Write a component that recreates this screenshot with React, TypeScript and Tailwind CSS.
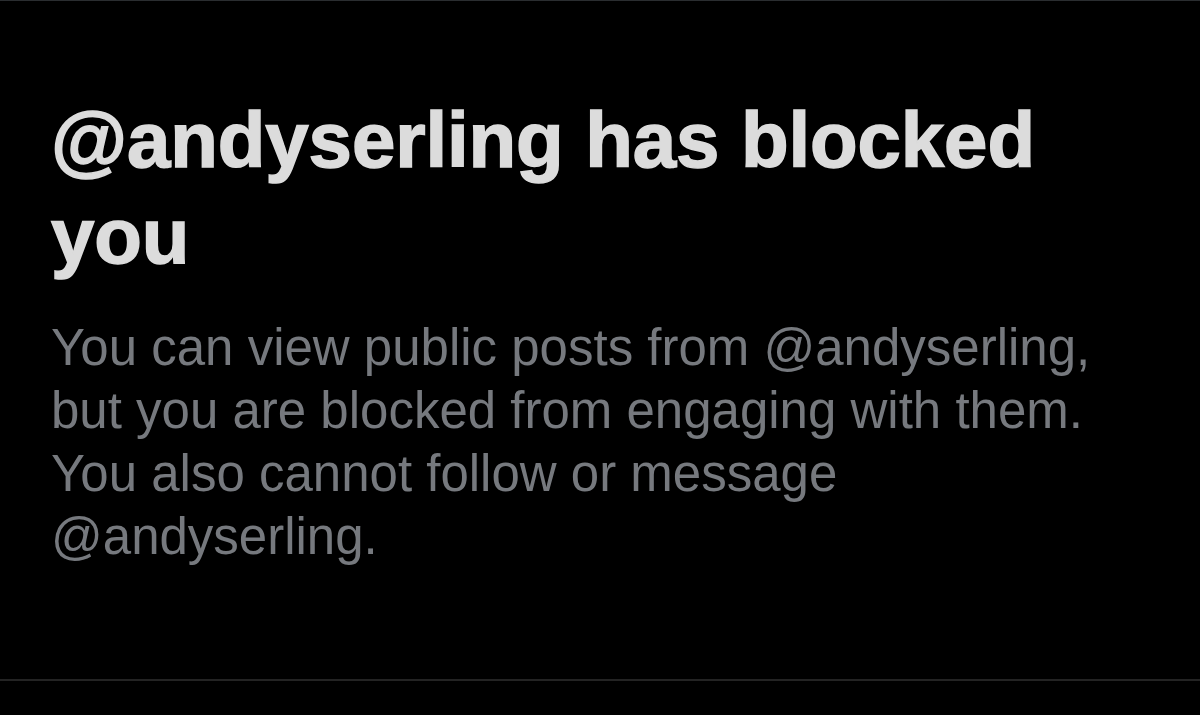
export default function App() {
  return (
    <div className="w-[1200px] h-[715px] bg-black flex flex-col overflow-hidden" style={{ fontFamily: '"Liberation Sans", Arial, sans-serif' }}>
      <div className="h-px bg-[#2a2d30]" />
      <div className="flex-1 pl-[51px] pr-[40px] pt-[91px]">
        <h1 className="w-[1100px] text-[78px] leading-[96px] font-bold text-[#dcdcdc] tracking-[-0.1px] [-webkit-text-stroke:1.5px_#dcdcdc]">
          @andyserling has blocked you
        </h1>
        <p className="w-[1100px] mt-[32px] text-[51px] leading-[63px] text-[#76797e]">
          You can view public posts from @andyserling, but you are blocked from engaging with them. You also cannot follow or message @andyserling.
        </p>
      </div>
      <div className="h-[2px] bg-[#232323]" />
      <div className="h-[34px]" />
    </div>
  );
}
